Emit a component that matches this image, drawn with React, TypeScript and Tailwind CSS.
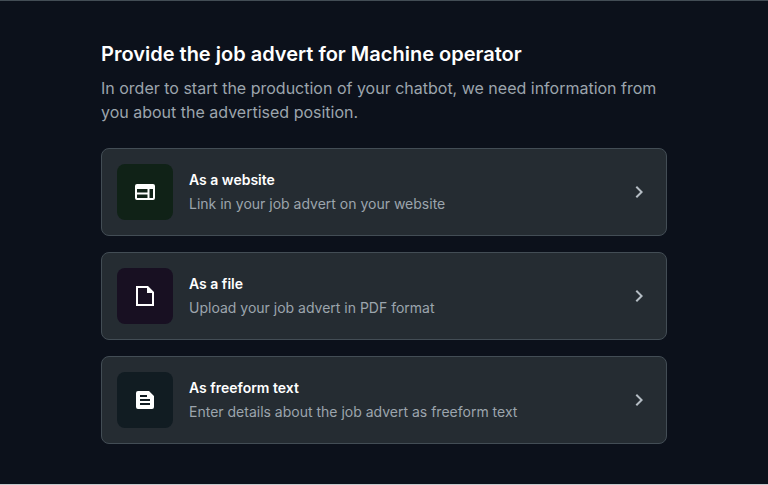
import React from "react";

type Option = {
  title: string;
  text: string;
  tile: string;
  path: string;
};

const options: Option[] = [
  {
    title: "As a website",
    text: "Link in your job advert on your website",
    tile: "bg-[#102217]",
    path: "M20 4H4a2 2 0 0 0-2 2v12a2 2 0 0 0 2 2h16a2 2 0 0 0 2-2V6a2 2 0 0 0-2-2zM4 9h10.500v3.500H4V9zm0 5.500h10.500V18H4v-3.500zM20 18h-3.500V9H20v9z",
  },
  {
    title: "As a file",
    text: "Upload your job advert in PDF format",
    tile: "bg-[#181022]",
    path: "M3 2v20h18V8l-6-6H3zm2 2h9v5h5v11H5V4z",
  },
  {
    title: "As freeform text",
    text: "Enter details about the job advert as freeform text",
    tile: "bg-[#111c22]",
    path: "M16 3H5a2 2 0 0 0-2 2v14a2 2 0 0 0 2 2h14a2 2 0 0 0 2-2V8l-5-5zM7 7h7v2H7V7zm10 10H7v-2h10v2zm0-4H7v-2h10v2z",
  },
];

function OptionCard({ title, text, tile, path }: Option) {
  return (
    <button
      type="button"
      className="flex w-full items-center gap-4 rounded-lg border border-[#434d55] bg-[#252c32] p-[15px] text-left"
    >
      <span className={`flex size-14 shrink-0 items-center justify-center rounded-lg ${tile}`}>
        <svg viewBox="0 0 24 24" className="size-6 fill-white" aria-hidden="true">
          <path d={path} />
        </svg>
      </span>
      <span className="flex grow flex-col">
        <span className="text-sm leading-6 font-semibold text-white">{title}</span>
        <span className="text-sm leading-6 text-[#9ca5ad]">{text}</span>
      </span>
      <svg viewBox="0 0 24 24" className="size-6 shrink-0 fill-[#b5bdc4]" aria-hidden="true">
        <path d="M10 6 8.590 7.410 13.170 12l-4.580 4.590L10 18l6-6z" />
      </svg>
    </button>
  );
}

export default function App() {
  return (
    <main className="min-h-screen border-t border-b border-t-[#434d55] border-b-[#c5c8cc] bg-[#0c111b] px-[101px] pt-[39px] pb-10 font-['Inter',sans-serif]">
      <h1 className="text-xl leading-7 font-semibold text-white">
        Provide the job advert for Machine operator
      </h1>
      <p className="mt-2 text-base leading-6 text-[#9ca5ad]">
        In order to start the production of your chatbot, we need information from you about the
        advertised position.
      </p>
      <div className="mt-6 flex flex-col gap-4">
        {options.map((option) => (
          <OptionCard key={option.title} {...option} />
        ))}
      </div>
    </main>
  );
}
